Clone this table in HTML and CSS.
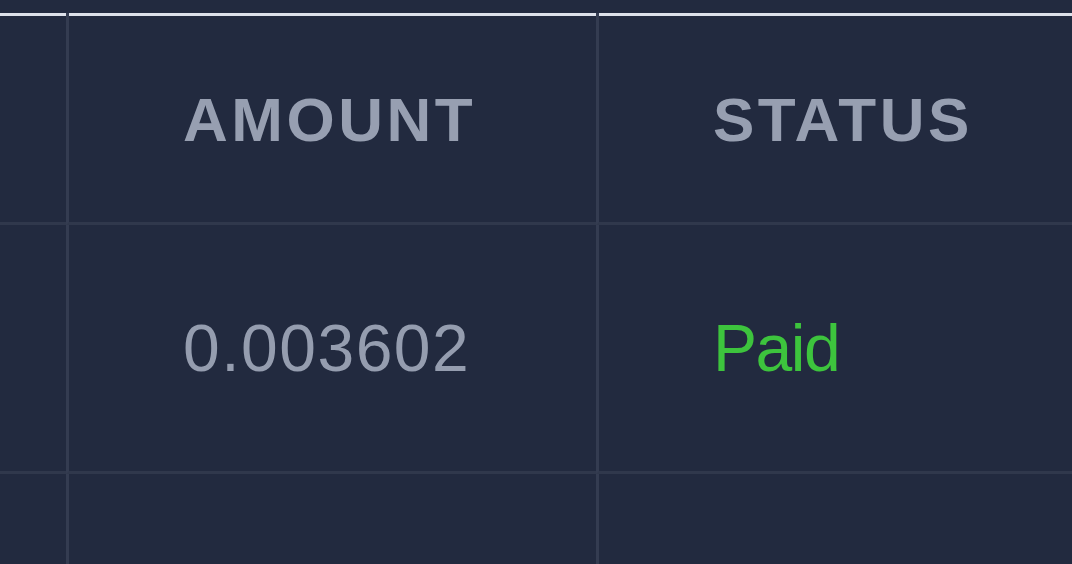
FILE: index.html
```html
<!DOCTYPE html>
<html lang="en">
<head>
    <meta charset="UTF-8">
    <meta name="viewport" content="width=device-width, initial-scale=1.0">
    <title>Payouts</title>
    <link rel="stylesheet" href="styles.css">
</head>
<body>
    <!-- payouts table -->
    <table class="payouts">
        <thead>
            <tr>
                <th class="col-date"></th>
                <th class="col-amount">AMOUNT</th>
                <th class="col-status">STATUS</th>
            </tr>
        </thead>
        <tbody>
            <tr class="row-main">
                <td class="col-date"></td>
                <td class="col-amount amount">0.003602</td>
                <td class="col-status status-paid">Paid</td>
            </tr>
            <tr class="row-next">
                <td class="col-date"></td>
                <td class="col-amount"></td>
                <td class="col-status"></td>
            </tr>
        </tbody>
    </table>
</body>
</html>
```

FILE: styles.css
```css
html, body {
    margin: 0;
    background-color: #222a3f;
    overflow: hidden;
}
body {
    padding-top: 13px;
    font-family: "Liberation Sans", Arial, sans-serif;
}
.payouts {
    border-collapse: separate;
    border-spacing: 0;
    width: 1200px;
    table-layout: fixed;
}
.payouts th, .payouts td {
    padding: 0 0 0 114px;
    text-align: left;
    border-bottom: 3px solid #30384c;
}
.payouts .col-date {
    width: 66px;
    padding: 0;
}
.payouts .col-amount {
    width: 413px;
    border-left: 3px solid #343c51;
}
.payouts .col-status {
    border-left: 3px solid #343c51;
}
.payouts th {
    height: 206px;
    box-shadow: inset 0 3px 0 #dde1ea;
    padding-top: 3px;
    font-size: 62px;
    font-weight: 700;
    letter-spacing: 3.5px;
    color: #979fb1;
}
.row-main td {
    height: 246px;
    font-size: 66px;
    font-weight: 400;
    padding-top: 0;
}
.row-next td {
    height: 120px;
}
.amount {
    color: #959daf;
    letter-spacing: 1.5px;
}
.status-paid {
    color: #3dc43d;
    letter-spacing: -1.5px;
}
```
